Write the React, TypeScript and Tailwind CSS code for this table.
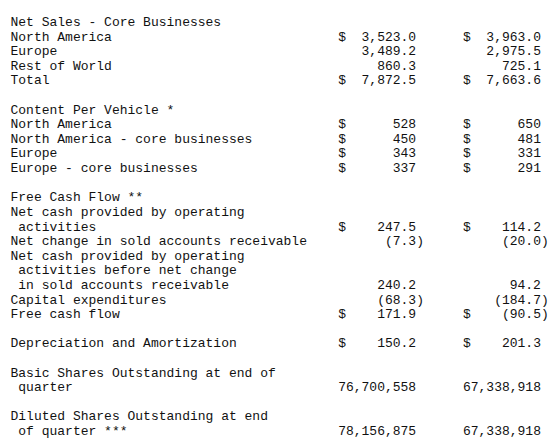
import React from "react";

type Row =
  | null
  | {
      label: string;
      d1?: boolean;
      v1?: string;
      d2?: boolean;
      v2?: string;
      wide?: boolean;
    };

const rows: Row[] = [
  { label: "Net Sales - Core Businesses" },
  { label: "North America", d1: true, v1: "3,523.0", d2: true, v2: "3,963.0" },
  { label: "Europe", v1: "3,489.2", v2: "2,975.5" },
  { label: "Rest of World", v1: "860.3", v2: "725.1" },
  { label: "Total", d1: true, v1: "7,872.5", d2: true, v2: "7,663.6" },
  null,
  { label: "Content Per Vehicle *" },
  { label: "North America", d1: true, v1: "528", d2: true, v2: "650" },
  { label: "North America - core businesses", d1: true, v1: "450", d2: true, v2: "481" },
  { label: "Europe", d1: true, v1: "343", d2: true, v2: "331" },
  { label: "Europe - core businesses", d1: true, v1: "337", d2: true, v2: "291" },
  null,
  { label: "Free Cash Flow **" },
  { label: "Net cash provided by operating" },
  { label: " activities", d1: true, v1: "247.5", d2: true, v2: "114.2" },
  { label: "Net change in sold accounts receivable", v1: "(7.3)", v2: "(20.0)" },
  { label: "Net cash provided by operating" },
  { label: " activities before net change" },
  { label: " in sold accounts receivable", v1: "240.2", v2: "94.2" },
  { label: "Capital expenditures", v1: "(68.3)", v2: "(184.7)" },
  { label: "Free cash flow", d1: true, v1: "171.9", d2: true, v2: "(90.5)" },
  null,
  { label: "Depreciation and Amortization", d1: true, v1: "150.2", d2: true, v2: "201.3" },
  null,
  { label: "Basic Shares Outstanding at end of" },
  { label: " quarter", v1: "76,700,558", v2: "67,338,918", wide: true },
  null,
  { label: "Diluted Shares Outstanding at end" },
  { label: " of quarter ***", v1: "78,156,875", v2: "67,338,918", wide: true },
];

function Num({ v, className = "" }: { v?: string; className?: string }) {
  if (!v) return <span className={className} />;
  const paren = v.endsWith(")");
  return (
    <span className={`text-right whitespace-pre ${paren ? "" : "pr-[1ch]"} ${className}`}>
      {v}
    </span>
  );
}

export default function App() {
  return (
    <div className="bg-white w-[553px] h-[444px] overflow-hidden pt-[16px] pl-[10.5px] font-['Liberation_Mono','Courier_New',monospace] text-[13px] leading-[14.62px] text-[#111111]">
      {rows.map((r, i) =>
        r === null ? (
          <div key={i} className="h-[14.62px]" />
        ) : (
          <div key={i} className="grid grid-cols-[42ch_1ch_10ch_5ch_1ch_10ch] h-[14.62px]">
            <span className="whitespace-pre">{r.label}</span>
            {r.wide ? (
              <>
                <Num v={r.v1} className="col-span-2" />
                <span />
                <Num v={r.v2} className="col-span-2" />
              </>
            ) : (
              <>
                <span>{r.d1 ? "$" : ""}</span>
                <Num v={r.v1} />
                <span />
                <span>{r.d2 ? "$" : ""}</span>
                <Num v={r.v2} />
              </>
            )}
          </div>
        )
      )}
    </div>
  );
}
